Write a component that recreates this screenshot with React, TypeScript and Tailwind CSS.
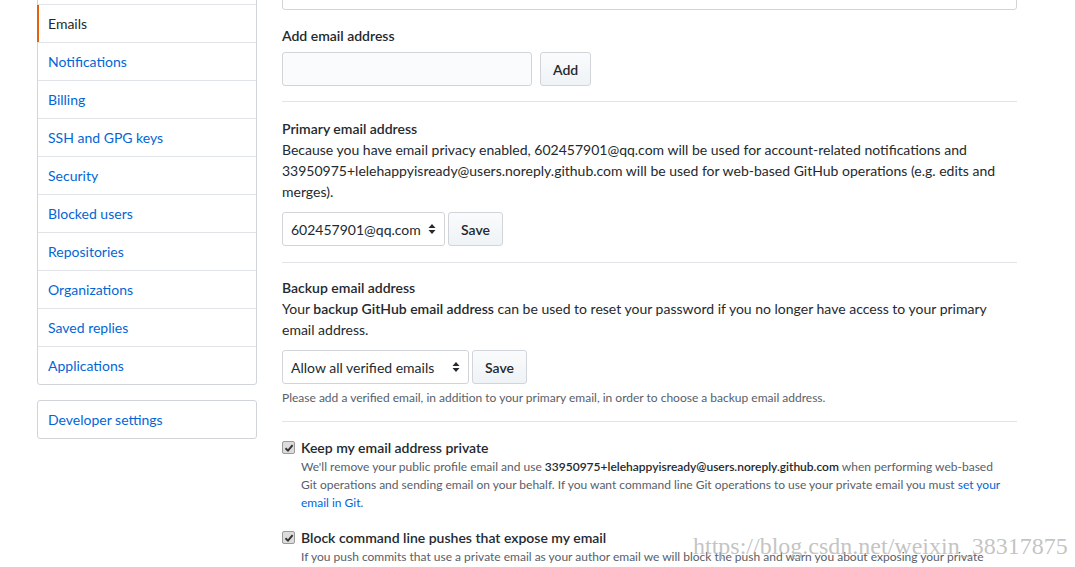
import React from "react";

const font = { fontFamily: "Lato, 'Noto Sans', 'Liberation Sans', sans-serif" };

function SideItem({ label, active, first }: { label: string; active?: boolean; first?: boolean }) {
  return (
    <div
      className={`relative flex items-center pl-[10px] text-[14px] ${first ? "h-[37px]" : "h-[38px] border-t border-[#e1e4e8]"} ${active ? "text-[#24292e]" : "text-[#0366d6]"}`}
    >
      {active && <div className="absolute left-[-1px] top-0 bottom-0 w-[2px] bg-[#e36209]" />}
      {label}
    </div>
  );
}

function Btn({ children }: { children: React.ReactNode }) {
  return (
    <div className="h-[34px] px-[12px] flex items-center rounded-[3px] border border-[#d1d5da] bg-gradient-to-b from-[#fafbfc] to-[#eff3f6] text-[14px] font-semibold text-[#24292e]">
      {children}
    </div>
  );
}

function Select({ value, w }: { value: string; w: string }) {
  return (
    <div className={`h-[34px] ${w} pl-[8px] pr-[8px] flex items-center justify-between rounded-[3px] border border-[#d1d5da] bg-white text-[14px] text-[#24292e]`}>
      <span>{value}</span>
      <svg width="8" height="12" viewBox="0 0 8 12">
        <path d="M4 1 L7.5 5 L0.5 5 Z" fill="#24292e" />
        <path d="M4 11 L7.5 7 L0.5 7 Z" fill="#24292e" />
      </svg>
    </div>
  );
}

function Check() {
  return (
    <div className="w-[13px] h-[13px] mt-[4px] rounded-[2px] border border-[#9a9a9a] bg-[#dcdcdc] flex items-center justify-center shrink-0">
      <svg width="10" height="10" viewBox="0 0 10 10">
        <path d="M1.5 5.2 L4 7.6 L8.6 2.2" stroke="#333" strokeWidth="1.9" fill="none" />
      </svg>
    </div>
  );
}

export default function App() {
  const items = [
    "",
    "Emails",
    "Notifications",
    "Billing",
    "SSH and GPG keys",
    "Security",
    "Blocked users",
    "Repositories",
    "Organizations",
    "Saved replies",
    "Applications",
  ];
  return (
    <div className="relative w-[1075px] h-[567px] overflow-hidden bg-white" style={font}>
      <div className="flex gap-[25px] pl-[37px]">
        <div className="w-[220px] shrink-0 mt-[-34px]">
          <div className="rounded-[3px] border border-[#d1d5da]">
            {items.map((l, i) => (
              <SideItem key={i} label={l} active={l === "Emails"} first={i === 0} />
            ))}
          </div>
          <div className="mt-[15px] rounded-[3px] border border-[#d1d5da]">
            <SideItem label="Developer settings" first />
          </div>
        </div>

        <div className="w-[735px] text-[#24292e] text-[14px] leading-[21px]">
          <div className="h-[40px] mt-[-30px] rounded-[3px] border border-[#d1d5da]" />

          <div className="mt-[15px] font-semibold">Add email address</div>
          <div className="mt-[6px] flex gap-[8px]">
            <div className="w-[250px] h-[34px] rounded-[3px] border border-[#d1d5da] bg-[#fafbfc]" />
            <Btn>Add</Btn>
          </div>

          <div className="mt-[15px] border-t border-[#e1e4e8]" />

          <div className="mt-[16px] font-semibold">Primary email address</div>
          <p className="whitespace-nowrap">
            Because you have email privacy enabled, 602457901@qq.com will be used for account-related notifications and
            <br />
            33950975+lelehappyisready@users.noreply.github.com will be used for web-based GitHub operations (e.g. edits and
            <br />
            merges).
          </p>
          <div className="mt-[10px] flex gap-[3px]">
            <Select value="602457901@qq.com" w="w-[163px]" />
            <Btn>Save</Btn>
          </div>

          <div className="mt-[16px] border-t border-[#e1e4e8]" />

          <div className="mt-[14px] font-semibold">Backup email address</div>
          <p className="whitespace-nowrap">
            Your <span className="font-semibold">backup GitHub email address</span> can be used to reset your password if you no longer have access to your primary
            <br />
            email address.
          </p>
          <div className="mt-[10px] flex gap-[3px]">
            <Select value="Allow all verified emails" w="w-[187px]" />
            <Btn>Save</Btn>
          </div>
          <p className="mt-[5px] text-[12px] leading-[18px] text-[#586069]">
            Please add a verified email, in addition to your primary email, in order to choose a backup email address.
          </p>

          <div className="mt-[14px] border-t border-[#e1e4e8]" />

          <div className="mt-[15px] flex gap-[6px]">
            <Check />
            <div>
              <div className="font-semibold">Keep my email address private</div>
              <p className="text-[12px] leading-[18px] text-[#586069] whitespace-nowrap">
                We'll remove your public profile email and use{" "}
                <span className="font-semibold text-[#24292e]">33950975+lelehappyisready@users.noreply.github.com</span> when performing web-based
                <br />
                Git operations and sending email on your behalf. If you want command line Git operations to use your private email you must{" "}
                <span className="text-[#0366d6]">set your</span>
                <br />
                <span className="text-[#0366d6]">email in Git</span>.
              </p>
            </div>
          </div>

          <div className="mt-[15px] flex gap-[6px]">
            <Check />
            <div>
              <div className="font-semibold">Block command line pushes that expose my email</div>
              <p className="text-[12px] leading-[18px] text-[#586069] whitespace-nowrap">
                If you push commits that use a private email as your author email we will block the push and warn you about exposing your private
              </p>
            </div>
          </div>
        </div>
      </div>

      <div
        className="absolute left-[693px] top-[532px] text-[24px] leading-[28px] text-[#b4b4b4]/80 whitespace-nowrap pointer-events-none"
        style={{ fontFamily: "'Liberation Serif', serif" }}
      >
        https://blog.csdn.net/weixin_38317875
      </div>
    </div>
  );
}
